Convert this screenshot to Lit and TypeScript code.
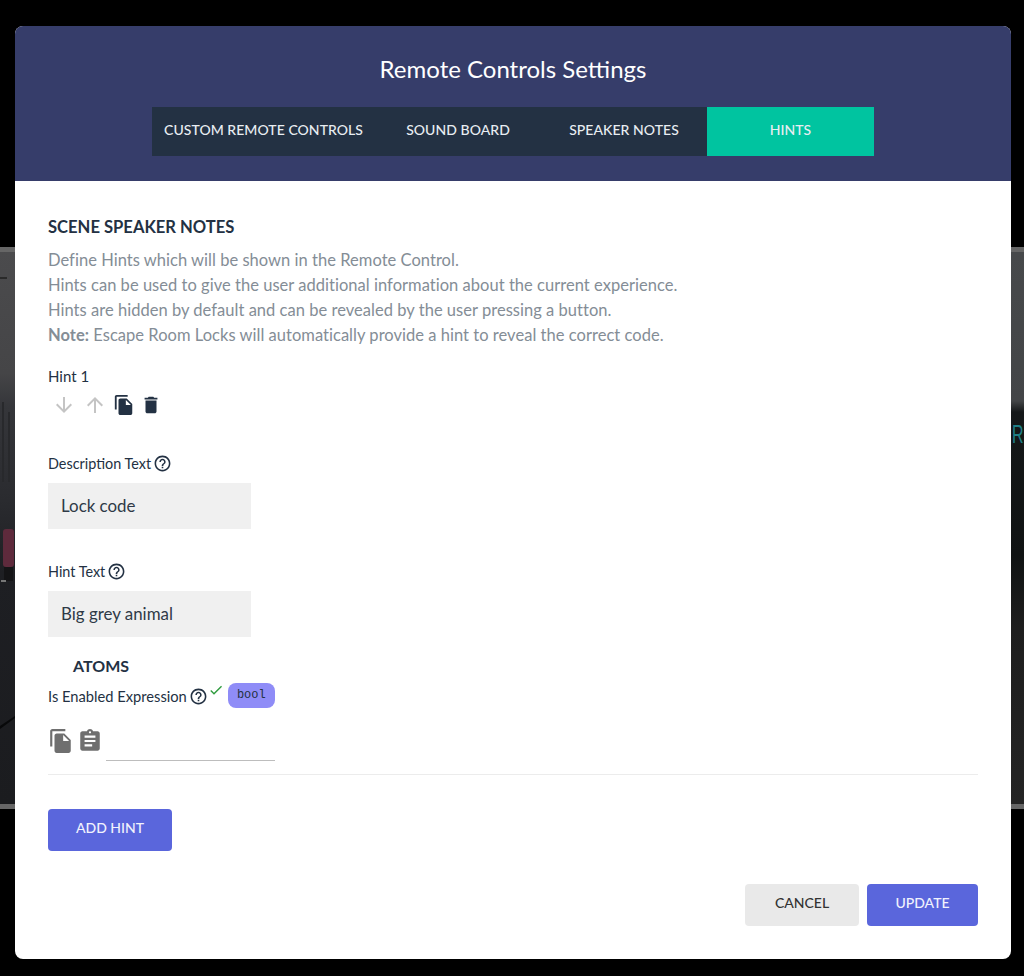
import { LitElement, html, css, svg } from 'lit';
import { customElement } from 'lit/decorators.js';

// material icon paths, 24x24 viewBox
const ICONS = {
  down: 'M20 12l-1.41-1.41L13 16.17V4h-2v12.17l-5.58-5.59L4 12l8 8 8-8z',
  up: 'M4 12l1.41 1.41L11 7.83V20h2V7.83l5.58 5.59L20 12l-8-8-8 8z',
  copy: 'M16 1H4c-1.1 0-2 .9-2 2v14h2V3h12V1zm-1 4l6 6v10c0 1.1-.9 2-2 2H7.99C6.89 23 6 22.1 6 21l.01-14c0-1.1.89-2 1.99-2h7zm-1 7h5.5L14 6.5V12z',
  trash: 'M6 19c0 1.1.9 2 2 2h8c1.1 0 2-.9 2-2V7H6v12zM19 4h-3.5l-1-1h-5l-1 1H5v2h14V4z',
  help: 'M11 18h2v-2h-2v2zm1-16C6.48 2 2 6.48 2 12s4.48 10 10 10 10-4.48 10-10S17.52 2 12 2zm0 18c-4.41 0-8-3.59-8-8s3.59-8 8-8 8 3.59 8 8-3.59 8-8 8zm0-14c-2.21 0-4 1.79-4 4h2c0-1.1.9-2 2-2s2 .9 2 2c0 2-3 1.75-3 5h2c0-2.25 3-2.5 3-5 0-2.21-1.79-4-4-4z',
  check: 'M9 16.17L4.83 12l-1.42 1.41L9 19 21 7l-1.41-1.41z',
  paste: 'M19 3h-4.18C14.4 1.84 13.3 1 12 1c-1.3 0-2.4.84-2.82 2H5c-1.1 0-2 .9-2 2v14c0 1.1.9 2 2 2h14c1.1 0 2-.9 2-2V5c0-1.1-.9-2-2-2zm-7 0c.55 0 1 .45 1 1s-.45 1-1 1-1-.45-1-1 .45-1 1-1zm2 14H7v-2h7v2zm3-4H7v-2h10v2zm0-4H7V7h10v2z',
};

const icon = (name: keyof typeof ICONS, cls: string) =>
  html`<svg class=${cls} viewBox="0 0 24 24">${svg`<path d=${ICONS[name]}></path>`}</svg>`;

const TABS = [
  { label: 'CUSTOM REMOTE CONTROLS', width: 223 },
  { label: 'SOUND BOARD', width: 166 },
  { label: 'SPEAKER NOTES', width: 166 },
  { label: 'HINTS', width: 167, active: true },
];

// the dimmed street photo that shows either side of the dialog
const backdropPhoto = svg`
  <defs>
    <linearGradient id="left" x1="0" y1="0" x2="0" y2="1">
      <stop offset="0" stop-color="#4b4b4d"></stop>
      <stop offset="0.22" stop-color="#454547"></stop>
      <stop offset="0.28" stop-color="#35363a"></stop>
      <stop offset="0.45" stop-color="#2a2b2f"></stop>
      <stop offset="0.58" stop-color="#1e1f23"></stop>
      <stop offset="1" stop-color="#1b1c1f"></stop>
    </linearGradient>
    <linearGradient id="right" x1="0" y1="0" x2="0" y2="1">
      <stop offset="0" stop-color="#47494b"></stop>
      <stop offset="0.27" stop-color="#434547"></stop>
      <stop offset="0.29" stop-color="#151819"></stop>
      <stop offset="0.55" stop-color="#101313"></stop>
      <stop offset="0.68" stop-color="#1e1e1e"></stop>
      <stop offset="1" stop-color="#242424"></stop>
    </linearGradient>
  </defs>
  <rect x="0" y="0" width="16" height="552" fill="url(#left)"></rect>
  <rect x="1008" y="0" width="16" height="552" fill="url(#right)"></rect>
  <rect x="0" y="25" width="7" height="2" fill="#2a2a2a"></rect>
  <rect x="2" y="150" width="2" height="80" fill="#28292c"></rect>
  <rect x="8" y="160" width="2" height="70" fill="#28292c"></rect>
  <rect x="3" y="277" rx="3" width="11" height="38" fill="#5e2a3c"></rect>
  <rect x="4" y="315" width="9" height="14" fill="#141416"></rect>
  <rect x="1" y="328" width="5" height="2" fill="#777"></rect>
  <path d="M0 474 L15 464 L15 466 L0 477 Z" fill="#08090a"></path>
  <text transform="translate(1012 191) scale(0.64 1)" font-family="Liberation Sans, sans-serif" font-size="25" fill="#1f7f86">R</text>
`;

@customElement('app-root')
export class AppRoot extends LitElement {
  static override styles = css`
    :host {
      display: block;
      font-family: 'Lato', 'Liberation Sans', sans-serif;
      color: #233143;
    }

    .stage {
      position: relative;
      height: 976px;
      background: #000;
      overflow: hidden;
      padding: 26px 13px 0 15px;
      box-sizing: border-box;
    }

    .backdrop {
      position: absolute;
      left: 0;
      right: 0;
      top: 247px;
      height: 562px;
      box-sizing: border-box;
      border-top: 5px solid #666;
      border-bottom: 5px solid #666;
      background: #222;
    }

    .backdrop svg {
      display: block;
    }

    .modal {
      position: relative;
      height: 933px;
      border-radius: 8px;
      background: #fff;
      overflow: hidden;
      display: flex;
      flex-direction: column;
    }

    .header {
      background: #363d6a;
      height: 155px;
      display: flex;
      flex-direction: column;
      align-items: center;
      flex-shrink: 0;
    }

    .title {
      margin: 28px 0 0;
      height: 30px;
      line-height: 30px;
      font-size: 24px;
      font-weight: 400;
      color: #fff;
    }

    .tabs {
      display: flex;
      margin-top: 23px;
      height: 49px;
      background: #233143;
    }

    .tab {
      display: flex;
      align-items: center;
      justify-content: center;
      padding-bottom: 5px;
      box-sizing: border-box;
      font-size: 14px;
      font-weight: 500;
      letter-spacing: 0.05px;
      color: #e8edf2;
    }

    .tab.active {
      background: #00c4a0;
    }

    .body {
      flex: 1;
      padding: 36px 33px 0;
      display: flex;
      flex-direction: column;
      align-items: flex-start;
    }

    .heading {
      margin: 0;
      font-size: 16.6px;
      line-height: 20px;
      font-weight: 700;
    }

    .intro {
      margin: 11px 0 0;
      font-size: 16.5px;
      line-height: 25px;
      letter-spacing: 0.03px;
      color: #848d96;
    }

    .hint-name {
      margin-top: 18px;
      font-size: 15px;
      line-height: 20px;
    }

    .actions {
      display: flex;
      align-items: center;
      gap: 6px;
      height: 24px;
      margin-top: 7px;
      padding-left: 4px;
    }

    .ico {
      width: 24px;
      height: 24px;
      fill: #233143;
      display: block;
    }

    .ico.muted {
      fill: #c4c4c4;
    }

    .ico.nudge {
      margin-left: 1px;
    }

    .ico.small {
      width: 22px;
      height: 22px;
    }

    .ico.pull {
      margin-left: -1px;
    }

    .label {
      display: flex;
      align-items: center;
      gap: 2px;
      font-size: 14.4px;
      line-height: 18px;
    }

    .help {
      width: 19px;
      height: 19px;
      fill: #233143;
    }

    .first {
      margin-top: 37px;
    }

    .next {
      margin-top: 33px;
    }

    .input {
      width: 203px;
      height: 46px;
      margin-top: 10px;
      padding: 0 0 1px 13px;
      box-sizing: border-box;
      background: #f0f0f0;
      display: flex;
      align-items: center;
      font-size: 16.9px;
      color: #2f3a47;
    }

    .atoms {
      margin: 19px 0 0 25px;
      font-size: 16px;
      line-height: 20px;
      font-weight: 700;
    }

    .expr {
      display: flex;
      align-items: center;
      margin-top: 6px;
      height: 26px;
    }

    .expr .label {
      font-size: 14.7px;
      padding-top: 2px;
    }

    .ok {
      width: 16px;
      height: 16px;
      fill: #2e9b3d;
      margin: -10px 4px 0 0;
    }

    .badge {
      width: 47px;
      height: 25px;
      border-radius: 8px;
      background: #8f8cf7;
      display: flex;
      align-items: center;
      justify-content: center;
      font-family: 'Liberation Mono', monospace;
      font-size: 12px;
      color: #233143;
    }

    .expr-input {
      display: flex;
      align-items: flex-start;
      gap: 3px;
      margin-top: 20px;
      height: 46px;
      width: 100%;
    }

    .expr-input .ico {
      width: 26px;
      height: 26px;
      fill: #6f6f6f;
    }

    .expr-input .line {
      width: 169px;
      height: 33px;
      box-sizing: border-box;
      border-bottom: 1px solid #bdbdbd;
    }

    .rule {
      width: 100%;
      height: 1px;
      background: #ececec;
      flex-shrink: 0;
    }

    .btn {
      height: 42px;
      padding-bottom: 5px;
      box-sizing: border-box;
      border-radius: 4px;
      display: flex;
      align-items: center;
      justify-content: center;
      font-size: 14px;
      font-weight: 500;
      background: #5a66dc;
      color: #f1f2fd;
    }

    .add {
      width: 124px;
      margin-top: 34px;
    }

    .footer {
      display: flex;
      justify-content: flex-end;
      gap: 8px;
      width: 100%;
      margin-top: 33px;
    }

    .cancel {
      width: 114px;
      background: #e9e9e9;
      color: #333;
    }

    .update {
      width: 111px;
    }
  `;

  override render() {
    return html`
      <div class="stage">
        <div class="backdrop">
          <svg width="1024" height="552" viewBox="0 0 1024 552">${backdropPhoto}</svg>
        </div>
        <div class="modal">
          <div class="header">
            <h1 class="title">Remote Controls Settings</h1>
            <div class="tabs">
              ${TABS.map(
                (t) => html`<div class="tab ${t.active ? 'active' : ''}" style="width:${t.width}px">${t.label}</div>`,
              )}
            </div>
          </div>
          <div class="body">
            <h2 class="heading">SCENE SPEAKER NOTES</h2>
            <p class="intro">
              Define Hints which will be shown in the Remote Control.<br />
              Hints can be used to give the user additional information about the current experience.<br />
              Hints are hidden by default and can be revealed by the user pressing a button.<br />
              <b>Note:</b> Escape Room Locks will automatically provide a hint to reveal the correct code.
            </p>
            <div class="hint-name">Hint 1</div>
            <div class="actions">
              ${icon('down', 'ico muted')} ${icon('up', 'ico muted nudge')} ${icon('copy', 'ico small')}
              ${icon('trash', 'ico small pull')}
            </div>
            <div class="label first">Description Text ${icon('help', 'help')}</div>
            <div class="input">Lock code</div>
            <div class="label next">Hint Text ${icon('help', 'help')}</div>
            <div class="input">Big grey animal</div>
            <div class="atoms">ATOMS</div>
            <div class="expr">
              <div class="label">Is Enabled Expression ${icon('help', 'help')}</div>
              ${icon('check', 'ok')}
              <div class="badge">bool</div>
            </div>
            <div class="expr-input">
              ${icon('copy', 'ico')} ${icon('paste', 'ico')}
              <div class="line"></div>
            </div>
            <div class="rule"></div>
            <div class="btn add">ADD HINT</div>
            <div class="footer">
              <div class="btn cancel">CANCEL</div>
              <div class="btn update">UPDATE</div>
            </div>
          </div>
        </div>
      </div>
    `;
  }
}
